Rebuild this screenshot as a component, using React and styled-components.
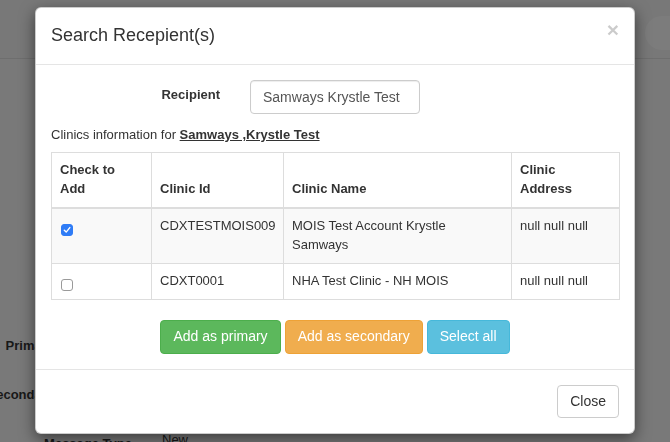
import React, { useState } from 'react'
import styled, { createGlobalStyle } from 'styled-components'

const GlobalStyle = createGlobalStyle`
  html, body {
    margin: 0;
    padding: 0;
    height: 100%;
    overflow: hidden;
  }
  body {
    background: #f2f2f2;
    font-family: "Liberation Sans", Arial, Helvetica, sans-serif;
    font-size: 13px;
    line-height: 1.42857;
    color: #333;
  }
`

// page behind the dialog
const Page = styled.div`
  width: 670px;
  height: 442px;
  overflow: hidden;
`

const NavBar = styled.div`
  height: 59px;
  border-bottom: 1px solid #dcdcdc;
  background: #f0f0f0;
  display: flex;
  justify-content: flex-end;
  align-items: flex-start;
  padding-top: 16px;
  box-sizing: border-box;
`

const SearchPill = styled.div`
  width: 60px;
  height: 34px;
  margin-right: -35px;
  border-radius: 17px;
  background: #f8f8f8;
`

const BgForm = styled.div`
  padding-top: 262px;
  display: flex;
  flex-direction: column;
`

const BgRow = styled.div`
  display: grid;
  grid-template-columns: 132px 1fr;
  column-gap: 30px;
  height: ${p => p.$h || 50}px;
  align-items: center;
`

const BgLabel = styled.div`
  display: flex;
  justify-content: flex-end;
  font-weight: bold;
  white-space: nowrap;
`

const BgValue = styled.div`
  margin-top: ${p => p.$shift || 0}px;
`

const Backdrop = styled.div`
  position: fixed;
  inset: 0;
  background: rgba(0, 0, 0, 0.5);
`

// dialog
const Dialog = styled.div`
  position: absolute;
  top: 7px;
  left: 35px;
  width: 600px;
  box-sizing: border-box;
  background: #fff;
  border: 1px solid rgba(0, 0, 0, 0.2);
  border-radius: 6px;
  box-shadow: 0 5px 15px rgba(0, 0, 0, 0.5);
`

const Header = styled.div`
  display: flex;
  justify-content: space-between;
  align-items: flex-start;
  padding: 15px;
  border-bottom: 1px solid #e5e5e5;
`

const Title = styled.h4`
  margin: 0;
  font-size: 18px;
  font-weight: 500;
  line-height: 1.42857;
  color: #333;
`

const CloseX = styled.button`
  border: 0;
  background: transparent;
  padding: 0;
  margin-top: -4px;
  font-family: "Liberation Sans", Arial, sans-serif;
  font-size: 21px;
  font-weight: bold;
  line-height: 1;
  color: #000;
  opacity: 0.2;
  text-shadow: 0 1px 0 #fff;
  cursor: pointer;
`

const Body = styled.div`
  padding: 15px;
`

const FormRow = styled.div`
  display: grid;
  grid-template-columns: 184px 1fr;
  column-gap: 30px;
  margin: 0 0 12px -15px;
`

const FieldLabel = styled.label`
  padding-top: 6px;
  text-align: right;
  font-weight: bold;
`

const TextInput = styled.input`
  width: 170px;
  height: 34px;
  box-sizing: border-box;
  padding: 6px 12px;
  border: 1px solid #ccc;
  border-radius: 4px;
  font-family: inherit;
  font-size: 14px;
  color: #555;
  box-shadow: inset 0 1px 1px rgba(0, 0, 0, 0.075);
`

const InfoLine = styled.div`
  margin-bottom: 8px;
`

const NameLink = styled.b`
  text-decoration: underline;
`

const Table = styled.table`
  width: 100%;
  table-layout: fixed;
  border-collapse: collapse;
  border: 1px solid #ddd;
  margin-bottom: 20px;
`

const Col = styled.col`
  width: ${p => p.$w}px;
`

const Th = styled.th`
  padding: 8px ${p => p.$padRight || 8}px 9px 8px;
  text-align: left;
  vertical-align: bottom;
  border: 1px solid #ddd;
  border-bottom-width: 2px;
`

const Tr = styled.tr`
  background: ${p => (p.$striped ? '#f9f9f9' : '#fff')};
`

const Td = styled.td`
  padding: 8px;
  vertical-align: top;
  border: 1px solid #ddd;
`

const CheckBox = styled.span`
  display: inline-flex;
  align-items: center;
  justify-content: center;
  width: 12px;
  height: 12px;
  margin: 7px 0 0 1px;
  box-sizing: border-box;
  border-radius: 3px;
  border: 1px solid ${p => (p.$on ? '#2f7cf6' : '#9a9a9a')};
  background: ${p => (p.$on ? '#2f7cf6' : '#fff')};
  vertical-align: top;
  cursor: pointer;
`

const ButtonBar = styled.div`
  display: flex;
  justify-content: center;
  gap: 4px;
`

const palette = {
  success: ['#5cb85c', '#4cae4c', '#fff'],
  warning: ['#f0ad4e', '#eea236', '#fff'],
  info: ['#5bc0de', '#46b8da', '#fff'],
  default: ['#fff', '#ccc', '#333'],
}

const Button = styled.button`
  padding: 6px 12px;
  font-family: "Liberation Sans", Arial, sans-serif;
  font-size: 14px;
  line-height: 1.42857;
  border-radius: 4px;
  border: 1px solid ${p => palette[p.$kind][1]};
  background: ${p => palette[p.$kind][0]};
  color: ${p => palette[p.$kind][2]};
  cursor: pointer;
`

const Footer = styled.div`
  display: flex;
  justify-content: flex-end;
  padding: 15px;
  border-top: 1px solid #e5e5e5;
`

const clinics = [
  { id: 'CDXTESTMOIS009', name: 'MOIS Test Account Krystle Samways', address: 'null null null' },
  { id: 'CDXT0001', name: 'NHA Test Clinic - NH MOIS', address: 'null null null' },
]

function Check({ on, onClick }) {
  return (
    <CheckBox $on={on} onClick={onClick}>
      {on && (
        <svg width="8" height="8" viewBox="0 0 8 8">
          <path d="M1.3 4.2 L3.2 6.1 L6.8 1.6" fill="none" stroke="#fff" strokeWidth="1.4" strokeLinecap="round" strokeLinejoin="round" />
        </svg>
      )}
    </CheckBox>
  )
}

export default function App() {
  const [checked, setChecked] = useState([true, false])

  const toggle = (i) => {
    setChecked(checked.map((c, j) => (j === i ? !c : c)))
  }

  return (
    <>
      <GlobalStyle />
      <Page>
        <NavBar>
          <SearchPill />
        </NavBar>
        <BgForm>
          <BgRow>
            <BgLabel>Primary Recipient(s)</BgLabel>
            <BgValue></BgValue>
          </BgRow>
          <BgRow $h={48}>
            <BgLabel>Secondary Recipient(s)</BgLabel>
            <BgValue></BgValue>
          </BgRow>
          <BgRow>
            <BgLabel>Message Type</BgLabel>
            <BgValue $shift={-8}>New</BgValue>
          </BgRow>
        </BgForm>
      </Page>
      <Backdrop />
      <Dialog>
        <Header>
          <Title>Search Recepient(s)</Title>
          <CloseX>×</CloseX>
        </Header>
        <Body>
          <FormRow>
            <FieldLabel>Recipient</FieldLabel>
            <TextInput defaultValue="Samways Krystle Test" />
          </FormRow>
          <InfoLine>
            Clinics information for <NameLink>Samways ,Krystle Test</NameLink>
          </InfoLine>
          <Table>
            <colgroup>
              <Col $w={100} />
              <Col $w={132} />
              <Col $w={228} />
              <Col $w={108} />
            </colgroup>
            <thead>
              <tr>
                <Th>Check to Add</Th>
                <Th>Clinic Id</Th>
                <Th>Clinic Name</Th>
                <Th $padRight={20}>Clinic Address</Th>
              </tr>
            </thead>
            <tbody>
              {clinics.map((c, i) => (
                <Tr key={c.id} $striped={i % 2 === 0}>
                  <Td>
                    <Check on={checked[i]} onClick={() => toggle(i)} />
                  </Td>
                  <Td>{c.id}</Td>
                  <Td>{c.name}</Td>
                  <Td>{c.address}</Td>
                </Tr>
              ))}
            </tbody>
          </Table>
          <ButtonBar>
            <Button $kind="success">Add as primary</Button>
            <Button $kind="warning">Add as secondary</Button>
            <Button $kind="info">Select all</Button>
          </ButtonBar>
        </Body>
        <Footer>
          <Button $kind="default">Close</Button>
        </Footer>
      </Dialog>
    </>
  )
}
